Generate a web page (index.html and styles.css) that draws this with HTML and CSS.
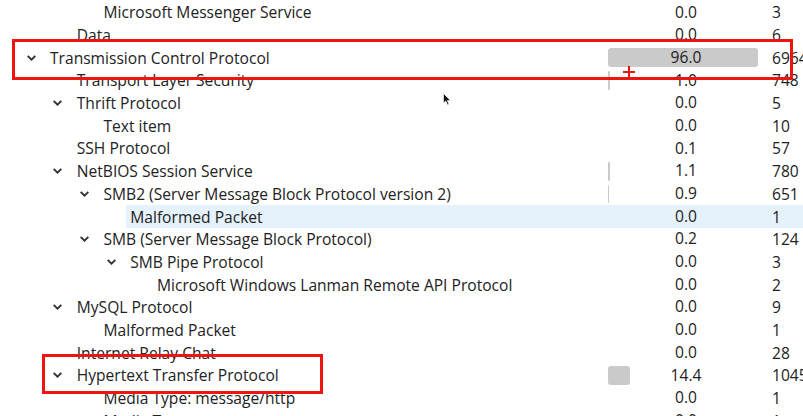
FILE: index.html
```html
<!DOCTYPE html>
<html lang="en">
<head>
<meta charset="UTF-8">
<title>Protocol Hierarchy</title>
<link rel="stylesheet" href="styles.css">
</head>
<body>
<div class="tree">
  <div class="row"><div class="name d2"><span class="tog"></span><span class="label">Microsoft Messenger Service</span></div><div class="pct"><span class="num">0.0</span></div><div class="pkts">3</div></div>
  <div class="row"><div class="name d1"><span class="tog"></span><span class="label">Data</span></div><div class="pct"><span class="num">0.0</span></div><div class="pkts">6</div></div>
  <div class="row"><div class="name d0"><span class="tog open"><svg viewBox="0 0 8 5"><polyline points="0.6,0.6 4,4 7.4,0.6"/></svg></span><span class="label">Transmission Control Protocol</span></div><div class="pct"><span class="bar" style="width:96%"></span><span class="num">96.0</span></div><div class="pkts">69644</div></div>
  <div class="row"><div class="name d1"><span class="tog"></span><span class="label">Transport Layer Security</span></div><div class="pct"><span class="bar" style="width:1%"></span><span class="num">1.0</span></div><div class="pkts">748</div></div>
  <div class="row"><div class="name d1"><span class="tog open"><svg viewBox="0 0 8 5"><polyline points="0.6,0.6 4,4 7.4,0.6"/></svg></span><span class="label">Thrift Protocol</span></div><div class="pct"><span class="num">0.0</span></div><div class="pkts">5</div></div>
  <div class="row"><div class="name d2"><span class="tog"></span><span class="label">Text item</span></div><div class="pct"><span class="num">0.0</span></div><div class="pkts">10</div></div>
  <div class="row"><div class="name d1"><span class="tog"></span><span class="label">SSH Protocol</span></div><div class="pct"><span class="num">0.1</span></div><div class="pkts">57</div></div>
  <div class="row"><div class="name d1"><span class="tog open"><svg viewBox="0 0 8 5"><polyline points="0.6,0.6 4,4 7.4,0.6"/></svg></span><span class="label">NetBIOS Session Service</span></div><div class="pct"><span class="bar" style="width:1.1%"></span><span class="num">1.1</span></div><div class="pkts">780</div></div>
  <div class="row"><div class="name d2"><span class="tog open"><svg viewBox="0 0 8 5"><polyline points="0.6,0.6 4,4 7.4,0.6"/></svg></span><span class="label">SMB2 (Server Message Block Protocol version 2)</span></div><div class="pct"><span class="bar" style="width:0.9%"></span><span class="num">0.9</span></div><div class="pkts">651</div></div>
  <div class="row selected"><div class="name d3"><span class="tog"></span><span class="label">Malformed Packet</span></div><div class="pct"><span class="num">0.0</span></div><div class="pkts">1</div></div>
  <div class="row"><div class="name d2"><span class="tog open"><svg viewBox="0 0 8 5"><polyline points="0.6,0.6 4,4 7.4,0.6"/></svg></span><span class="label">SMB (Server Message Block Protocol)</span></div><div class="pct"><span class="num">0.2</span></div><div class="pkts">124</div></div>
  <div class="row"><div class="name d3"><span class="tog open"><svg viewBox="0 0 8 5"><polyline points="0.6,0.6 4,4 7.4,0.6"/></svg></span><span class="label">SMB Pipe Protocol</span></div><div class="pct"><span class="num">0.0</span></div><div class="pkts">3</div></div>
  <div class="row"><div class="name d4"><span class="tog"></span><span class="label">Microsoft Windows Lanman Remote API Protocol</span></div><div class="pct"><span class="num">0.0</span></div><div class="pkts">2</div></div>
  <div class="row"><div class="name d1"><span class="tog open"><svg viewBox="0 0 8 5"><polyline points="0.6,0.6 4,4 7.4,0.6"/></svg></span><span class="label">MySQL Protocol</span></div><div class="pct"><span class="num">0.0</span></div><div class="pkts">9</div></div>
  <div class="row"><div class="name d2"><span class="tog"></span><span class="label">Malformed Packet</span></div><div class="pct"><span class="num">0.0</span></div><div class="pkts">1</div></div>
  <div class="row"><div class="name d1"><span class="tog"></span><span class="label">Internet Relay Chat</span></div><div class="pct"><span class="num">0.0</span></div><div class="pkts">28</div></div>
  <div class="row"><div class="name d1"><span class="tog open"><svg viewBox="0 0 8 5"><polyline points="0.6,0.6 4,4 7.4,0.6"/></svg></span><span class="label">Hypertext Transfer Protocol</span></div><div class="pct"><span class="bar" style="width:14.4%"></span><span class="num">14.4</span></div><div class="pkts">10459</div></div>
  <div class="row"><div class="name d2"><span class="tog"></span><span class="label">Media Type: message/http</span></div><div class="pct"><span class="num">0.0</span></div><div class="pkts">1</div></div>
  <div class="row"><div class="name d2"><span class="tog"></span><span class="label">Media Type</span></div><div class="pct"><span class="num">0.0</span></div><div class="pkts">1</div></div>
</div>

<!-- annotations drawn over the capture -->
<div class="mark mark-tcp"></div>
<div class="mark mark-http"></div>
<div class="plus"></div>
<svg class="cursor" viewBox="0 0 8 13"><path d="M0.5 0.5 L0.5 10 L2.8 8 L4.6 12 L6 11.3 L4.3 7.6 L7.3 7.4 Z"/></svg>
</body>
</html>
```

FILE: styles.css
```css
body {
  margin: 0;
  background: #fff;
  font-family: "Open Sans", "Noto Sans CJK KR", sans-serif;
  font-size: 15.6px;
  color: #222;
  overflow: hidden;
  width: 803px;
  height: 416px;
  position: relative;
}
.tree {
  padding-top: 1px;
}
.row {
  display: grid;
  grid-template-columns: 604px 164px 1fr;
  height: 22.7px;
  white-space: nowrap;
}
.name {
  display: flex;
  align-items: center;
  overflow: hidden;
}
.d0 { padding-left: 23px; }
.d1 { padding-left: 49.75px; }
.d2 { padding-left: 76.5px; }
.d3 { padding-left: 103.25px; }
.d4 { padding-left: 130px; }
.tog {
  width: 23px;
  flex: none;
  display: flex;
  align-items: center;
}
.tog svg {
  width: 9px;
  height: 6px;
  margin-left: 3.5px;
  fill: none;
  stroke: #333;
  stroke-width: 1.7;
}
.label {
  flex: 1;
  padding-left: 4px;
  align-self: stretch;
  display: flex;
  align-items: center;
}
.pct {
  display: grid;
  padding: 2px 4px;
}
.bar, .num {
  grid-area: 1 / 1;
}
.bar {
  background: #cacaca;
  border-radius: 3px;
  justify-self: start;
  height: 100%;
}
.num {
  justify-self: center;
  align-self: center;
  line-height: 1;
}
.pkts {
  display: flex;
  align-items: center;
  padding-left: 4px;
  overflow: hidden;
}
.selected .label,
.selected .pct,
.selected .pkts {
  background: #e5f1fb;
}
.mark {
  position: absolute;
  border: 3px solid #f0140f;
}
.mark-tcp {
  left: 12px;
  top: 39px;
  width: 775px;
  height: 35px;
}
.mark-http {
  left: 42px;
  top: 354px;
  width: 275px;
  height: 34px;
}
.plus {
  position: absolute;
  left: 623px;
  top: 66px;
  width: 12px;
  height: 12px;
  background:
    linear-gradient(#e8150f, #e8150f) center / 12px 2px no-repeat,
    linear-gradient(#e8150f, #e8150f) center / 2px 12px no-repeat;
}
.cursor {
  position: absolute;
  left: 443px;
  top: 93px;
  width: 8px;
  height: 13px;
  fill: #111;
  stroke: #fff;
  stroke-width: 0.6;
}
```
